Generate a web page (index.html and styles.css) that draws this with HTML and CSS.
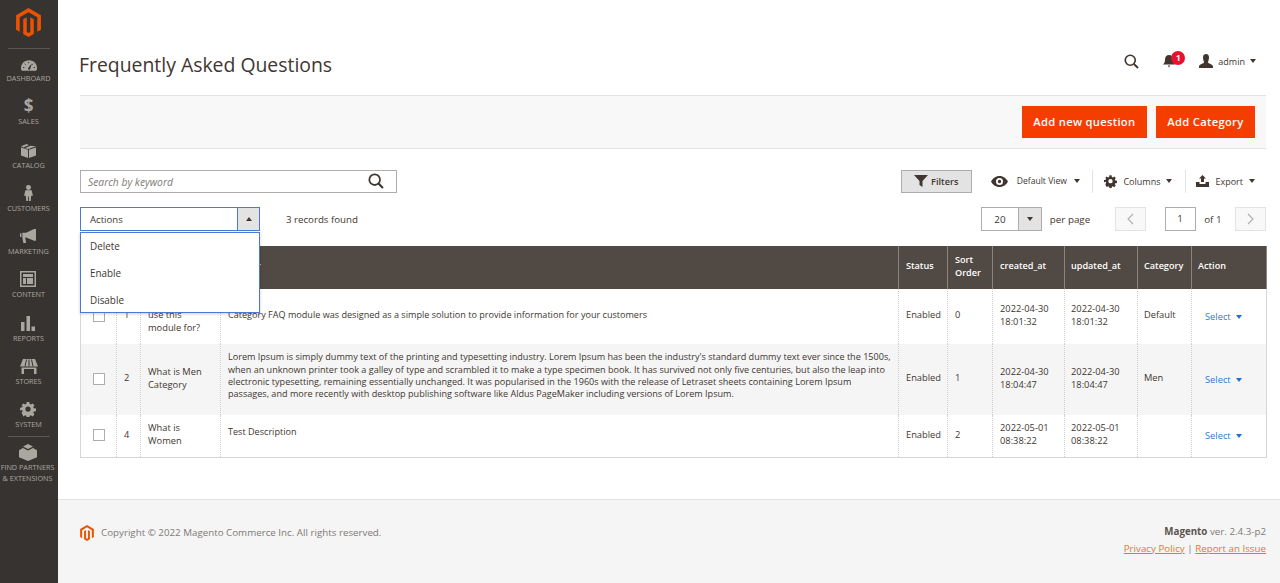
FILE: index.html
```html
<!DOCTYPE html>
<html lang="en">
<head>
<meta charset="utf-8">
<title>Frequently Asked Questions</title>
<link rel="stylesheet" href="styles.css">
</head>
<body>
<div class="app">
<nav class="side">
  <div class="logo"><svg width="25" height="29" viewBox="0 0 24 28"><path fill="#eb5202" d="M12 0 24 7V21L20.500 23V9L12 4 3.500 9V23L0 21V7z"/><path fill="#eb5202" d="M10.300 8.900 6.900 10.900V25L12 28 17.100 25V10.900L13.700 8.900V23.100L12 24.100 10.300 23.100z"/></svg></div>
  <div class="navitem first"><svg class="ni" width="16" height="11" viewBox="0 0 24 16"><path fill="#aaa6a0" d="M12 0C5 0 0 5.500 0 11.500 0 13 .3 14.500 1 16h22c.7-1.500 1-3 1-4.500C24 5.500 19 0 12 0z"/><path stroke="#373330" stroke-width="1.500" fill="none" d="M3 11h2M5.500 5.500l1.500 1.300M11.500 2.500v2M18.500 5.500 17 6.800M19 11h2"/><path fill="#373330" d="m16.500 4.500-6 7.500a2 2 0 0 0 3 2z"/></svg><span>DASHBOARD</span></div>
  <div class="navitem"><div class="dollar">$</div><span>SALES</span></div>
  <div class="navitem"><svg class="ni" width="15" height="15" viewBox="0 0 16 16"><path fill="#aaa6a0" d="M0 3.500 6 1 8.500 2.200 2.500 4.800zM4 5.500 10 3 16 3.500 8 6.500zM0 4.700 7.500 7.300V16L0 13.300zM8.500 7.300 16 4.700V13.300L8.500 16z"/></svg><span>CATALOG</span></div>
  <div class="navitem"><svg class="ni" width="9" height="16" viewBox="0 0 10 18"><circle cx="5" cy="2.800" r="2.800" fill="#aaa6a0"/><path fill="#aaa6a0" d="M1.500 6h7L10 12H8l-.5 6H5.500V13h-1v5H2.500L2 12H0z"/></svg><span>CUSTOMERS</span></div>
  <div class="navitem"><svg class="ni" width="16" height="15" viewBox="0 0 17 16"><path fill="#aaa6a0" d="M0 4.500h1.500v4H0zM2.500 4h4L15 0h2v12.500h-2L6.500 9H5.500l1 6H3.500L2.500 9z"/></svg><span>MARKETING</span></div>
  <div class="navitem"><svg class="ni" width="16" height="16" viewBox="0 0 16 16"><path fill="#aaa6a0" fill-rule="evenodd" d="M0 0h16v16H0zM1.500 1.500v13h13v-13zM3 3h10v3H3zM3 7h3v6H3zM7 7h6v6H7z"/></svg><span>CONTENT</span></div>
  <div class="navitem"><svg class="ni" width="14" height="15" viewBox="0 0 14 15"><path fill="#aaa6a0" d="M0 6h3.500v9H0zM5.500 0H9v15H5.500zM10.500 10.500H14V15h-3.500z"/></svg><span>REPORTS</span></div>
  <div class="navitem"><svg class="ni" width="18" height="15" viewBox="0 0 18 15"><path fill="#aaa6a0" d="M3 0h12l3 7.500H0zM1.500 8.500h15V15h-15z"/><path stroke="#373330" stroke-width="1" fill="none" d="M6.500 .5 5 7.500M9 .5v7M11.500 .5 13 7.500"/><path fill="#373330" d="M4 10h10v5H4z"/></svg><span>STORES</span></div>
  <div class="navitem"><svg class="ni" width="16" height="15" viewBox="-1 0 18 17"><path fill="#aaa6a0" fill-rule="evenodd" d="M6.500 0h3l.4 2.300 1.400.6L13.200 1.600l2.100 2.100-1.300 1.900.6 1.400 2.400.5v3l-2.400.4-.6 1.400 1.300 1.900-2.100 2.100-1.900-1.300-1.400.6-.4 2.400h-3l-.4-2.400-1.400-.6-1.900 1.300L.7 12.300l1.300-1.900-.6-1.400L-1 9.500v-3l2.400-.5.600-1.400L.7 3.700l2.100-2.100 1.900 1.300 1.400-.6zM8 5a3 3 0 1 0 0 6 3 3 0 0 0 0-6z"/></svg><span>SYSTEM</span></div>
  <div class="navitem partners"><svg class="ni" width="18" height="17" viewBox="0 0 18 17"><path fill="#aaa6a0" d="M9 0 14 2.500 9 5 4 2.500zM4 4l5 2.500L14 4l4 2.200v7L9 17 0 13.200v-7z"/></svg><span>FIND PARTNERS<br>&amp; EXTENSIONS</span></div>
</nav>
<div class="main">
  <header class="top">
    <h1>Frequently Asked Questions</h1>
    <div class="tools">
      <svg width="15" height="15" viewBox="0 0 18 18"><circle cx="7.500" cy="7.500" r="6" fill="none" stroke="#41362f" stroke-width="2"/><path d="m11.800 11.800 5 5" stroke="#41362f" stroke-width="2.400"/></svg>
      <div class="bell"><svg width="12" height="13" viewBox="0 0 12 13"><path fill="#41362f" d="M6 0c2.500 0 4 2 4 4.500 0 2.500.6 3.500 2 5H0c1.400-1.500 2-2.500 2-5C2 2 3.500 0 6 0zM4.800 10.500h2.400L6 12.500z"/></svg><span class="badge">1</span></div>
      <div class="user"><svg width="14" height="14" viewBox="0 0 14 14"><path fill="#41362f" d="M7 0c2 0 3 1.500 3 3.500S9 7.500 9 8.500c0 1 5 1.500 5 4V14H0v-1.500c0-2.500 5-3 5-4S4 5.500 4 3.500 5 0 7 0z"/></svg><span>admin</span><i class="caret dark"></i></div>
    </div>
  </header>
  <div class="actionbar"><button class="pri">Add new question</button><button class="pri">Add Category</button></div>
  <div class="gridtools">
    <div class="search"><span>Search by keyword</span><svg width="16" height="16" viewBox="0 0 18 18"><circle cx="7.500" cy="7.500" r="6" fill="none" stroke="#41362f" stroke-width="2"/><path d="m11.800 11.800 5 5" stroke="#41362f" stroke-width="2.400"/></svg></div>
    <div class="rt">
      <button class="filters"><svg width="14" height="12" viewBox="0 0 14 12"><path fill="#41362f" d="M0 0h14L8.500 6v6l-3-2V6z"/></svg>Filters</button>
      <div class="tool view"><svg width="17" height="11" viewBox="0 0 17 11"><path fill="#41362f" fill-rule="evenodd" d="M8.500 0C12.500 0 15.500 2.500 17 5.500 15.500 8.500 12.500 11 8.500 11S1.500 8.500 0 5.500C1.500 2.500 4.500 0 8.500 0zm0 2a3.500 3.500 0 1 0 0 7 3.500 3.500 0 0 0 0-7zm0 1.800a1.700 1.700 0 1 1 0 3.400 1.700 1.700 0 0 1 0-3.400z"/></svg><span>Default View</span><i class="caret dark"></i></div>
      <div class="tool cols"><svg width="13" height="13" viewBox="-1 0 18 17"><path fill="#41362f" fill-rule="evenodd" d="M6.500 0h3l.4 2.300 1.400.6L13.200 1.600l2.100 2.100-1.300 1.900.6 1.400 2.400.5v3l-2.400.4-.6 1.400 1.300 1.900-2.100 2.100-1.900-1.300-1.400.6-.4 2.400h-3l-.4-2.400-1.400-.6-1.900 1.300L.7 12.300l1.300-1.900-.6-1.400L-1 9.500v-3l2.400-.5.600-1.400L.7 3.700l2.100-2.100 1.900 1.300 1.400-.6zM8 5a3 3 0 1 0 0 6 3 3 0 0 0 0-6z"/></svg><span>Columns</span><i class="caret dark"></i></div>
      <div class="tool exp"><svg width="13" height="12" viewBox="0 0 13 12"><path fill="#41362f" d="M6.500 0 10 3.500H8V7H5V3.500H3zM0 7h3.500v2h6V7H13v5H0z"/></svg><span>Export</span><i class="caret dark"></i></div>
    </div>
  </div>
  <div class="gridbar">
    <div class="actions">
      <div class="actsel"><span>Actions</span><b><i class="caret up"></i></b></div>
      <ul class="menu"><li>Delete</li><li>Enable</li><li>Disable</li></ul>
    </div>
    <div class="found">3 records found</div>
    <div class="pager">
      <div class="pp"><span>20</span><b><i class="caret dark"></i></b></div>
      <span class="perp">per page</span>
      <div class="nav"><svg width="7" height="12" viewBox="0 0 7 12"><path d="M6 1 1 6l5 5" fill="none" stroke="#adadad" stroke-width="1.100"/></svg></div>
      <div class="pnum">1</div>
      <span class="of">of 1</span>
      <div class="nav"><svg width="7" height="12" viewBox="0 0 7 12"><path d="m1 1 5 5-5 5" fill="none" stroke="#adadad" stroke-width="1.100"/></svg></div>
    </div>
  </div>
  <table class="grid">
    <colgroup><col class="c1"><col class="c2"><col class="c3"><col class="c4"><col class="c5"><col class="c6"><col class="c7"><col class="c8"><col class="c9"><col class="c10"></colgroup>
    <thead><tr><th></th><th>ID</th><th>Question</th><th>Answer</th><th>Status</th><th>Sort Order</th><th>created_at</th><th>updated_at</th><th>Category</th><th>Action</th></tr></thead>
    <tbody>
      <tr class="r1"><td class="ck"><i></i></td><td>1</td><td>What can I<br>use this<br>module for?</td><td class="desc"><div>Category FAQ module was designed as a simple solution to provide information for your customers</div></td><td>Enabled</td><td>0</td><td>2022-04-30 18:01:32</td><td>2022-04-30 18:01:32</td><td>Default</td><td class="sel"><a>Select</a><i class="caret blue"></i></td></tr>
      <tr class="r2 alt"><td class="ck"><i></i></td><td>2</td><td>What is Men Category</td><td class="desc"><div>Lorem Ipsum is simply dummy text of the printing and typesetting industry. Lorem Ipsum has been the industry's standard dummy text ever since the 1500s, when an unknown printer took a galley of type and scrambled it to make a type specimen book. It has survived not only five centuries, but also the leap into electronic typesetting, remaining essentially unchanged. It was popularised in the 1960s with the release of Letraset sheets containing Lorem Ipsum passages, and more recently with desktop publishing software like Aldus PageMaker including versions of Lorem Ipsum.</div></td><td>Enabled</td><td>1</td><td>2022-04-30 18:04:47</td><td>2022-04-30 18:04:47</td><td>Men</td><td class="sel"><a>Select</a><i class="caret blue"></i></td></tr>
      <tr class="r3"><td class="ck"><i></i></td><td>4</td><td>What is Women</td><td class="desc"><div>Test Description</div></td><td>Enabled</td><td>2</td><td>2022-05-01 08:38:22</td><td>2022-05-01 08:38:22</td><td></td><td class="sel"><a>Select</a><i class="caret blue"></i></td></tr>
    </tbody>
  </table>
  <footer class="foot">
    <div class="copy"><svg width="14" height="16" viewBox="0 0 24 28"><path fill="#eb5202" d="M12 0 24 7V21L20.500 23V9L12 4 3.500 9V23L0 21V7z"/><path fill="#eb5202" d="M10.300 8.900 6.900 10.900V25L12 28 17.100 25V10.900L13.700 8.900V23.100L12 24.100 10.300 23.100z"/></svg><span>Copyright © 2022 Magento Commerce Inc. All rights reserved.</span></div>
    <div class="ver"><p><b>Magento</b> ver. 2.4.3-p2</p><p class="links"><a>Privacy Policy</a> | <a>Report an Issue</a></p></div>
  </footer>
</div>
</div>
</body>
</html>
```
FILE: styles.css
```css
*{box-sizing:border-box}
html,body{margin:0;height:100%}
body{font-family:"Open Sans","Noto Sans",sans-serif;font-size:9.6px;color:#41362f;background:#fff;overflow:hidden}
.app{display:flex;height:583px}
.side{width:58px;flex:none;background:#373330;color:#aaa6a0;display:flex;flex-direction:column;align-items:center;padding-right:1px}
.logo{height:49px;width:42px;border-bottom:1px solid #5a5652;display:flex;justify-content:center;padding-top:8px}
.navitem{height:43.300px;display:flex;flex-direction:column;align-items:center;justify-content:flex-end;font-size:7.250px;line-height:10px;text-align:center;white-space:nowrap;padding-bottom:1px}
.navitem.first{height:35px}
.navitem .ni{margin-bottom:2px}
.partners{border-top:1px solid #5a5652;width:42px;height:55px;margin-top:6px;justify-content:flex-start;padding:7px 2px 0 0}
.partners.navitem{line-height:11px}
.partners .ni{margin-bottom:1px}
.dollar{font-size:17px;font-weight:700;line-height:16px;margin-bottom:2px;color:#aaa6a0}
.main{flex:1;min-width:0;display:flex;flex-direction:column;padding-left:22px;padding-right:14px;position:relative}
.top{height:95px;display:flex;align-items:flex-start;justify-content:space-between;padding-top:50px}
h1{margin:0 0 0 -1px;font-size:19.400px;font-weight:400;line-height:30px;color:#41362f}
.tools{position:absolute;right:14px;top:52px;display:flex;align-items:center;height:18px}
.bell{position:relative;margin-left:24px;width:12px;height:13px;display:flex}
.badge{position:absolute;left:8px;top:-4px;width:14px;height:14px;border-radius:50%;background:#e8112d;color:#fff;font-size:8px;font-weight:700;line-height:14px;text-align:center}
.user{display:flex;align-items:center;margin-left:24px;margin-right:10px;font-size:9px;color:#41362f}
.user span{margin-left:5px}
.caret{display:inline-block;width:0;height:0;border-left:3px solid transparent;border-right:3px solid transparent;border-top:4px solid #41362f}
.user .caret{margin-left:5px}
.actionbar{height:54px;background:#f8f8f8;border-top:1px solid #e3e3e3;border-bottom:1px solid #e3e3e3;display:flex;justify-content:flex-end;align-items:center;gap:9px;padding-right:11px}
.pri{height:32px;border:1px solid #f53d00;background:#f53d00;color:#fff;font:600 11.200px/1 "Open Sans",sans-serif;letter-spacing:.3px;padding:0 10.500px;border-radius:0}
.gridtools{display:flex;justify-content:space-between;align-items:center;height:22px;margin-top:21px}
.search{width:317px;height:23px;border:1px solid #adadad;display:flex;justify-content:space-between;align-items:center;padding:0 12px 0 7px}
.search span{font-style:italic;color:#7f7a75;font-size:10.300px;padding-top:1px}
.rt{display:flex;align-items:center;height:22px}
.filters{width:71px;height:23px;background:#e3e3e3;border:1px solid #adadad;font:600 9.200px "Open Sans",sans-serif;color:#41362f;display:flex;align-items:center;justify-content:center;gap:3px;padding:0}
.tool{display:flex;align-items:center;height:23px;font-size:9px;color:#41362f}
.tool span{margin-left:9px}
.tool .caret{margin-left:6px}
.view{margin-left:19px;padding-right:12px;border-right:1px solid #e3e3e3;font-size:8.600px}
.view .caret{margin-left:7.500px}
.cols{padding-left:11px;padding-right:13px;border-right:1px solid #e3e3e3}
.cols span{margin-left:6px}
.exp{padding-left:10px;padding-right:11px}
.exp span{margin-left:6px}
.gridbar{display:flex;align-items:center;height:24px;margin-top:15px;position:relative}
.actions{position:relative;width:180px}
.actsel{width:180px;height:24px;border:1px solid #4d78d6;display:flex;align-items:center;justify-content:space-between;font-size:9.600px;padding-left:9px}
.actsel b{width:22px;height:22px;background:#e3e3e3;border-left:1px solid #4d78d6;display:flex;align-items:center;justify-content:center}
.caret.up{border-top:0;border-bottom:4px solid #41362f}
.menu{position:absolute;left:0;top:25px;width:180px;height:81px;margin:0;padding:0;list-style:none;background:#fff;border:1px solid #4d78d6;box-shadow:0 1px 3px rgba(0,0,0,.2);z-index:5}
.menu li{height:26.800px;line-height:26.800px;padding-left:9px;font-size:9.900px}
.found{margin-left:26px;font-size:9.700px}
.pager{margin-left:auto;display:flex;align-items:center;font-size:9.800px}
.pp{width:61px;height:24px;border:1px solid #adadad;display:flex;align-items:center;justify-content:space-between}
.pp span{margin-left:12px}
.pp b{width:23px;height:22px;background:#e3e3e3;border-left:1px solid #adadad;display:flex;align-items:center;justify-content:center}
.perp{margin-left:7.500px;margin-right:24.500px}
.nav{width:31px;height:24px;background:#f8f8f8;border:1px solid #e3e3e3;display:flex;align-items:center;justify-content:center}
.pnum{width:31px;height:24px;border:1px solid #adadad;text-align:center;line-height:22px;margin-left:19px}
.of{margin:0 13.500px 0 8.500px}
.grid{width:1186px;table-layout:fixed;border-collapse:collapse;margin-top:15px;font-size:9.300px;line-height:12.500px}
.c1{width:36px}.c2{width:24px}.c3{width:80px}.c4{width:678px}.c5{width:49px}.c6{width:45px}.c7{width:72px}.c8{width:73px}.c9{width:54px}.c10{width:75px}
.grid th{height:43px;background:#514943;color:#fff;font-weight:600;font-size:9.100px;text-align:left;padding:0 7px 4px;border-left:1px solid #8a837e;border-right:1px solid #8a837e;line-height:13px}
.grid td{padding:0 7px 2px;border-left:1px dotted #cfcfcf;border-right:1px dotted #cfcfcf;vertical-align:middle}
.grid th:nth-child(n+8),.grid td:nth-child(n+8){padding-left:6px}
.grid td:first-child{border-left:1px solid #d6d6d6}
.grid td:last-child{border-right:1px solid #d6d6d6}
.grid tbody tr:last-child td{border-bottom:1px solid #d6d6d6}
.r1 td{height:55px}.r2 td{height:71px}.r3 td{height:42px}
.alt td{background:#f5f5f5}
.ck{text-align:center}
.ck i{display:block;width:12px;height:12px;border:1px solid #adadad;background:#fff;margin:0 auto}
.desc{font-size:9.080px;line-height:12.400px}
.desc div{padding-bottom:5px}
.r1 .desc div{padding-bottom:1px}
.grid td.sel{padding-left:13px;padding-top:3px;color:#1979c3}
.sel a{color:#2e7ad6}
.caret.blue{border-top-color:#1f6fd6;margin-left:5px;vertical-align:1px}
.foot{margin:41px -14px 0 -22px;flex:1;background:#f5f5f5;border-top:1px solid #e3e3e3;display:flex;justify-content:space-between;padding:25px 14px 0 22px;font-size:9.780px;color:#7f7a75;line-height:13px}
.copy{display:flex;align-items:flex-start;gap:7px}
.copy span{padding-top:1px}
.ver{text-align:right}
.ver p{margin:0 0 4px}
.ver b{color:#5a544f}
.links a{color:#f0703a;text-decoration:underline}
```
